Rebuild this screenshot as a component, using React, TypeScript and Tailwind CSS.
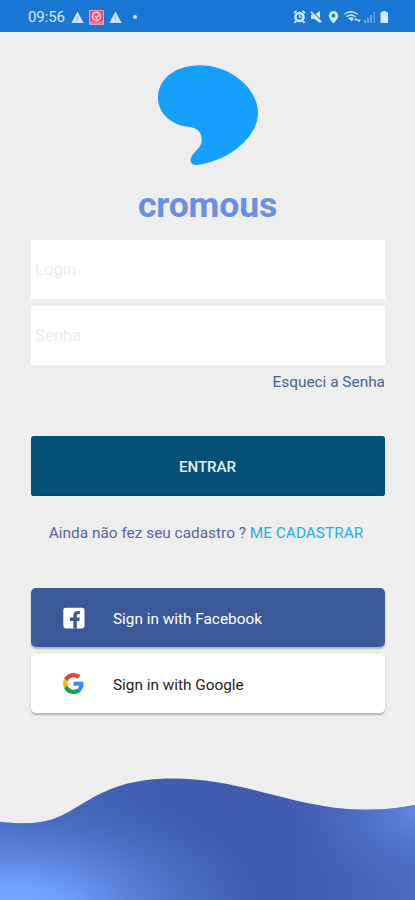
import React from 'react';

interface SocialButtonProps {
  label: string;
  icon: React.ReactNode;
  className: string;
}

const WarningIcon: React.FC = () => (
  <svg className="h-[12px] w-[13px]" viewBox="0 0 13 12">
    <path d="M6.5.5L12.7 12H.3z" fill="#cfe5fa" />
    <path d="M6.5 4.5v3.7M6.5 9.2v1.2" stroke="#8fbdec" strokeWidth="1.3" />
  </svg>
);

const StatusBar: React.FC = () => (
  <header className="flex h-8 items-center justify-between bg-[#1976d2] pl-7 pr-[25px] pt-[2px] text-[#d5e9fb]">
    <div className="flex items-center">
      <span className="w-[43px] text-[15px] leading-4 tracking-[-0.1px]">09:56</span>
      <WarningIcon />
      <svg className="ml-[5px] h-[15px] w-[15px]" viewBox="0 0 15 15">
        <rect width="15" height="15" rx="1" fill="#ed98b8" />
        <rect x="1" y="1" width="13" height="10.5" fill="#e94b75" />
        <circle cx="7.5" cy="6.3" r="4" fill="#e94b75" stroke="#f9d0dd" strokeWidth="1.6" />
        <path d="M6 6l1.5 2L11 3" fill="none" stroke="#f9d0dd" strokeWidth="1.3" />
        <path d="M2 13h11" stroke="#e94b75" strokeWidth="1" />
      </svg>
      <span className="ml-[5px] flex"><WarningIcon /></span>
      <span className="ml-[11px] h-1 w-1 rounded-full bg-[#d5e9fb]" />
    </div>
    <svg className="h-[14px] w-[97px]" viewBox="0 0 97 14" fill="currentColor">
      {/* alarm */}
      <path d="M1 3.2L3.5.8M12 3.2L9.5.8M3 11l-1.5 1.8M10 11l1.5 1.8" stroke="currentColor" strokeWidth="1.8" />
      <circle cx="6.5" cy="7" r="5.3" />
      <circle cx="6.5" cy="7" r="2.8" fill="#1976d2" />
      <path d="M6.6 4.8v2.4h2" fill="none" stroke="currentColor" strokeWidth="1.2" />
      {/* muted */}
      <path d="M18 4.5h3.5L27 1v12l-5.5-4H18z" />
      <path d="M18.8 .8l11 11" stroke="#1976d2" strokeWidth="1.2" />
      <path d="M18 1.8l10.5 10.5" stroke="currentColor" strokeWidth="1.6" />
      {/* location */}
      <path fillRule="evenodd" d="M40.5 1a4.7 4.7 0 0 0-4.7 4.7c0 3.4 4.7 7.6 4.7 7.6s4.7-4.2 4.7-7.6A4.7 4.7 0 0 0 40.5 1zm0 2.8a1.9 1.9 0 1 1 0 3.8 1.9 1.9 0 0 1 0-3.8z" />
      {/* wifi */}
      <g fill="none" stroke="currentColor" strokeWidth="1.4">
        <path d="M51.5 4.2q6.5-5 13 0M53.5 6.7q4.5-3.5 9 0M55.5 9q2.5-2 5 0" />
      </g>
      <path d="M56.5 9l2.1-1.2L60.5 9l-1.9 2.5zM63 7.5l1.8 3h-3.6zM66 12.5l-1.8-3h3.6z" />
      {/* signal */}
      <g opacity=".4">
        <path d="M71 10h2v3h-2zM74 8h2v5h-2zM77 5h2v8h-2zM80.5 2h1.5v11h-1.5z" />
      </g>
      {/* battery */}
      <path d="M87.5 2.2h2V1h3.5v1.2h2V13h-7.5z" />
    </svg>
  </header>
);

const FacebookIcon: React.FC = () => (
  <svg className="h-[22px] w-[22px]" viewBox="0 0 22 22">
    <rect x=".3" y=".7" width="21.2" height="20.8" rx="2.4" fill="#fff" />
    <path
      d="M10.4 21.5V14H7v-3.5h3.4V8.2c0-2.8 1.6-4.3 4.1-4.3h2.4v3.4h-1.6c-1.2 0-1.5.6-1.5 1.6v1.6h3l-.5 3.5h-2.5v7.5z"
      fill="#3b5998"
    />
  </svg>
);

const GoogleIcon: React.FC = () => (
  <svg className="h-[21px] w-[21px]" viewBox="0 0 48 48">
    <path fill="#ea4335" d="M24 9.5c3.54 0 6.71 1.22 9.21 3.6l6.85-6.85C35.9 2.38 30.47 0 24 0 14.62 0 6.51 5.38 2.56 13.22l7.98 6.19C12.43 13.72 17.74 9.5 24 9.5z" />
    <path fill="#4285f4" d="M46.98 24.55c0-1.57-.15-3.09-.38-4.55H24v9.02h12.94c-.58 2.96-2.26 5.48-4.78 7.18l7.73 6c4.51-4.18 7.09-10.36 7.09-17.65z" />
    <path fill="#fbbc05" d="M10.53 28.59c-.48-1.45-.76-2.99-.76-4.59s.27-3.14.76-4.59l-7.98-6.19C.92 16.46 0 20.12 0 24s.92 7.54 2.56 10.78l7.97-6.19z" />
    <path fill="#11a04b" d="M24 48c6.48 0 11.93-2.13 15.89-5.81l-7.73-6c-2.15 1.45-4.92 2.3-8.16 2.3-6.26 0-11.57-4.22-13.47-9.91l-7.98 6.19C6.51 42.62 14.62 48 24 48z" />
  </svg>
);

const SocialButton: React.FC<SocialButtonProps> = ({ label, icon, className }) => (
  <button
    type="button"
    className={`flex h-[59px] w-full items-center rounded-[5px] pl-8 text-left text-[15.35px] shadow-[0_1.5px_2px_rgba(0,0,0,0.24)] ${className}`}
  >
    <span className="flex w-[50px] items-center">{icon}</span>
    <span className="pt-1">{label}</span>
  </button>
);

const Wave: React.FC = () => (
  <svg className="mt-auto block h-[123px] w-full" viewBox="0 0 415 123" preserveAspectRatio="none">
    <defs>
      <linearGradient id="base" x1="0" y1="0" x2="1" y2="0">
        <stop offset="0" stopColor="#4669bf" />
        <stop offset=".4" stopColor="#405eb0" />
        <stop offset=".67" stopColor="#405ab0" />
        <stop offset="1" stopColor="#4b69bf" />
      </linearGradient>
      <radialGradient id="glowLeft" gradientUnits="userSpaceOnUse" cx="0" cy="0" r="1" gradientTransform="translate(14 130) scale(270 122)">
        <stop offset="0" stopColor="#78a7ff" />
        <stop offset=".2" stopColor="#709ffa" />
        <stop offset=".42" stopColor="#5f87e0" stopOpacity=".9" />
        <stop offset=".7" stopColor="#4f72c8" stopOpacity=".6" />
        <stop offset="1" stopColor="#4263b6" stopOpacity="0" />
      </radialGradient>
      <radialGradient id="glowRight" gradientUnits="userSpaceOnUse" cx="0" cy="0" r="1" gradientTransform="translate(425 34) scale(140 90)">
        <stop offset="0" stopColor="#6489e4" />
        <stop offset="1" stopColor="#4863b8" stopOpacity="0" />
      </radialGradient>
      <clipPath id="waveShape">
        <path d="M0 44.8C16 47 34 47 48 43.5C82 35 99 1.5 172 1.5C245 1.5 297 32.7 365 32.7C385 32.7 400 31 415 28V123H0Z" />
      </clipPath>
    </defs>
    <g clipPath="url(#waveShape)">
      <rect width="415" height="123" fill="url(#base)" />
      <rect width="415" height="123" fill="url(#glowLeft)" />
      <rect width="415" height="123" fill="url(#glowRight)" />
    </g>
  </svg>
);

const App: React.FC = () => {
  return (
    <div className="flex h-[900px] w-[415px] flex-col overflow-hidden bg-[#eeeeee] font-[Roboto,sans-serif]">
      <StatusBar />

      <main className="flex flex-col pl-[31px] pr-[30px] pt-[33px]">
        <div className="flex flex-col items-center">
          <svg className="h-[101px] w-[101px]" viewBox="0 0 101 101">
            <path
              d="M42 .3C17 .3 0 14 0 33C0 48 13 60 30 61.8C40 62.8 43.8 68 43.8 75C43.8 84 32.5 88 32.5 95C32.5 98.5 35.5 100.5 39.5 100C71 96 100 72 100 48C100 24 73 .3 42 .3Z"
              fill="#14a0fc"
            />
          </svg>
          <h1 className="mt-[17px] pr-px text-[35.5px] font-bold leading-[44px] tracking-[-0.1px] text-[#668fe5]">cromous</h1>
        </div>

        <form className="mt-[13px] flex flex-col" onSubmit={(e) => e.preventDefault()}>
          <div className="flex flex-col gap-[7px]">
            <input
              className="h-[59px] w-full bg-white px-1 text-[16.7px] placeholder:text-[#ededed]"
              placeholder="Login"
            />
            <input
              type="password"
              className="h-[59px] w-full bg-white px-1 text-[16.7px] placeholder:text-[#ededed]"
              placeholder="Senha"
            />
          </div>
          <a className="mt-[7px] self-end text-[15.4px] leading-5 text-[#48619d]">Esqueci a Senha</a>
          <button
            type="submit"
            className="mt-[44px] h-[60px] rounded-[3px] bg-[#055075] pr-px pt-[2px] text-[15.1px] font-medium text-[#e5eff4] shadow-[inset_0_-1px_1px_#04466e]"
          >
            ENTRAR
          </button>
        </form>

        <p className="mt-[27px] whitespace-nowrap pr-1 text-center text-[15.4px] leading-5 text-[#5663a0]">
          Ainda não fez seu cadastro ? <a className="text-[#22aeea]">ME CADASTRAR</a>
        </p>

        <div className="mt-[45px] flex flex-col gap-[7px]">
          <SocialButton label="Sign in with Facebook" icon={<FacebookIcon />} className="bg-[#3b5998] text-white" />
          <SocialButton label="Sign in with Google" icon={<GoogleIcon />} className="bg-white text-[#252525]" />
        </div>
      </main>

      <Wave />
    </div>
  );
};

export default App;
